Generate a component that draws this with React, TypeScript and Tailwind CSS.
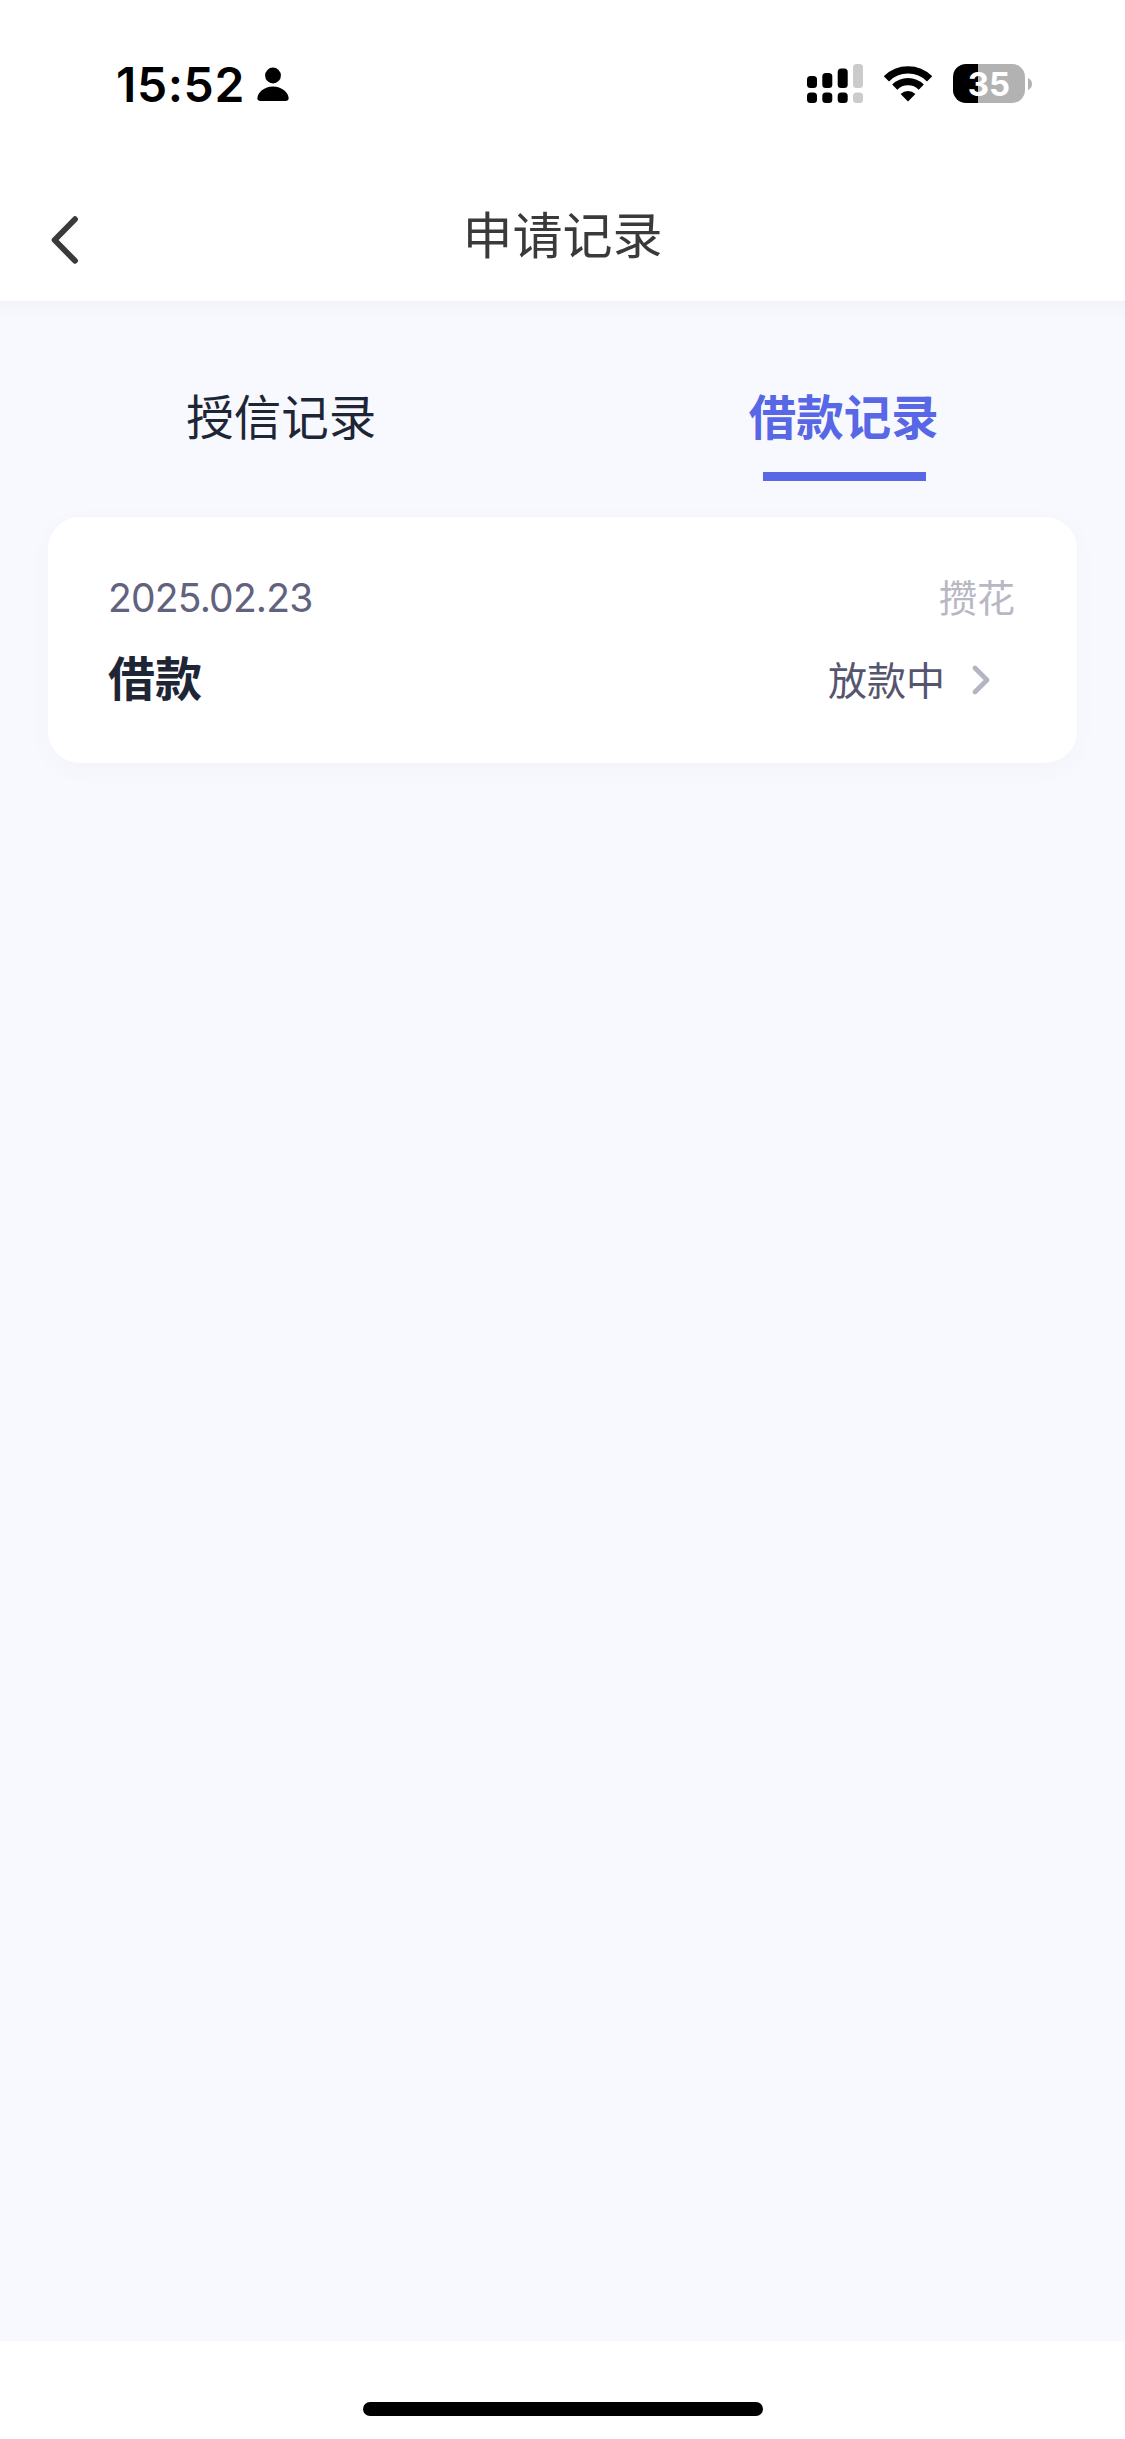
import { useState } from "react";

interface LoanRecord {
  id: number;
  date: string;
  title: string;
  product: string;
  status: string;
}

const TABS = [
  { key: "credit", label: "授信记录" },
  { key: "loan", label: "借款记录" },
];

const RECORDS: LoanRecord[] = [
  { id: 1, date: "2025.02.23", title: "借款", product: "攒花", status: "放款中" },
];

function SignalIcon() {
  return (
    <svg width="56" height="39" viewBox="0 0 56 39">
      <rect x="0" y="12" width="10" height="12" rx="3.5" />
      <rect x="15.3" y="9" width="10" height="15" rx="3.5" />
      <rect x="30.7" y="4.5" width="10" height="19.5" rx="3.5" />
      <rect x="46" y="0" width="10" height="24" rx="3.5" fill="#cbcbcb" />
      <rect x="0" y="28.5" width="10" height="10.5" rx="3.5" />
      <rect x="15.3" y="28.5" width="10" height="10.5" rx="3.5" />
      <rect x="30.7" y="28.5" width="10" height="10.5" rx="3.5" />
      <rect x="46" y="28.5" width="10" height="10.5" rx="3.5" fill="#cbcbcb" />
    </svg>
  );
}

function WifiIcon() {
  return (
    <svg width="48" height="36" viewBox="0 0 48 36">
      <path d="M2.4 12.8A30.5 30.5 0 0 1 45.6 12.8" fill="none" stroke="#000" strokeWidth="7.4" />
      <path d="M10.7 21.1A18.8 18.8 0 0 1 37.3 21.1" fill="none" stroke="#000" strokeWidth="7.2" />
      <path d="M24 35.5L16.6 28.1A10.5 10.5 0 0 1 31.4 28.1Z" />
    </svg>
  );
}

function StatusBar() {
  return (
    <div className="flex h-[168px] items-start justify-between pt-[64px] pr-[93px] pl-[116px] text-black">
      <div className="flex h-[39px] items-center">
        <span className="mt-[2px] w-[127px] text-[48px] leading-[39px] font-semibold tracking-[0.6px]">15:52</span>
        <svg className="mt-[2px] ml-[14px]" width="32" height="35" viewBox="0 0 32 35">
          <circle cx="16" cy="8.5" r="7.9" />
          <path d="M16 19.6C24.5 19.6 31.6 25.5 31.6 31.2C31.6 33 30.4 34 28.6 34H3.4C1.6 34 .4 33 .4 31.2C.4 25.5 7.5 19.6 16 19.6Z" />
        </svg>
      </div>
      <div className="flex h-[39px] items-center">
        <SignalIcon />
        <div className="ml-[21px]">
          <WifiIcon />
        </div>
        <div className="ml-[21px] flex h-[39px] w-[72px] items-center justify-center rounded-[13px] bg-linear-to-r from-black from-[25px] to-[#b2b2b2] to-[25px]">
          <span className="mt-[2px] text-[33px] leading-[39px] font-bold text-white">35</span>
        </div>
        <svg className="ml-[3px]" width="4" height="12" viewBox="0 0 4 12" fill="#b2b2b2">
          <path d="M0 0C2.4 1 4 3.3 4 6S2.4 11 0 12Z" />
        </svg>
      </div>
    </div>
  );
}

function NavBar() {
  return (
    <div className="grid h-[133px] grid-cols-[1fr_auto_1fr] items-start">
      <button className="mt-[48px] ml-[50px] w-[30px]" aria-label="返回">
        <svg width="30" height="48" viewBox="0 0 30 48" fill="none" stroke="#3a3a3a" strokeWidth="5.8" strokeLinecap="round" strokeLinejoin="round">
          <path d="M25 3.2L4.6 24L25 44.8" />
        </svg>
      </button>
      <h1 className="mt-[35px] text-[50px] leading-[66px] text-[#3a3a3a]">申请记录</h1>
    </div>
  );
}

function RecordCard({ record }: { record: LoanRecord }) {
  return (
    <div className="h-[246px] rounded-[32px] bg-white pt-[51px] pr-[62px] pl-[60px] shadow-[0_6px_24px_rgba(60,80,150,0.03)]">
      <div className="flex h-[60px] items-center justify-between">
        <span className="text-[39px] tracking-[-0.8px] text-[#62627e]">{record.date}</span>
        <span className="text-[38px] text-[#b8b8c4]">{record.product}</span>
      </div>
      <div className="mt-[16px] flex h-[70px] items-center justify-between">
        <span className="text-[47px] font-bold text-[#1e2636]">{record.title}</span>
        <div className="mt-[4px] mr-[24px] flex items-center">
          <span className="text-[39px] text-[#55556f]">{record.status}</span>
          <svg className="mb-[3px] ml-[26px]" width="20" height="30" viewBox="0 0 20 30" fill="none" stroke="#b4b4c2" strokeWidth="4.6" strokeLinecap="round" strokeLinejoin="round">
            <path d="M4 3L16 15L4 27" />
          </svg>
        </div>
      </div>
    </div>
  );
}

export default function App() {
  const [activeTab, setActiveTab] = useState("loan");

  return (
    <div className="flex h-[2439px] w-[1125px] flex-col bg-white font-['Inter','Noto_Sans_CJK_SC',sans-serif]">
      <StatusBar />
      <NavBar />

      <main className="flex-1 bg-[#f8f9fe]">
        <div className="h-[20px] bg-linear-to-b from-[#f3f4f9] to-[#f8f9fe]" />

        <div className="grid h-[196px] grid-cols-2">
          {TABS.map((tab) => {
            const active = tab.key === activeTab;
            return (
              <button
                key={tab.key}
                onClick={() => setActiveTab(tab.key)}
                className={`flex flex-col items-center pt-[62px] text-[47.5px] leading-[70px] ${
                  active ? "font-bold text-[#5767e5]" : "text-[#1e2636]"
                }`}
              >
                {tab.label}
                {active && <span className="mt-[19px] ml-px h-[9px] w-[163px] bg-[#5767e5]" />}
              </button>
            );
          })}
        </div>

        <div className="px-[48px]">
          {RECORDS.map((record) => (
            <RecordCard key={record.id} record={record} />
          ))}
        </div>
      </main>

      <footer className="flex h-[98px] justify-center pt-[61px]">
        <div className="h-[14px] w-[400px] rounded-full bg-black" />
      </footer>
    </div>
  );
}
